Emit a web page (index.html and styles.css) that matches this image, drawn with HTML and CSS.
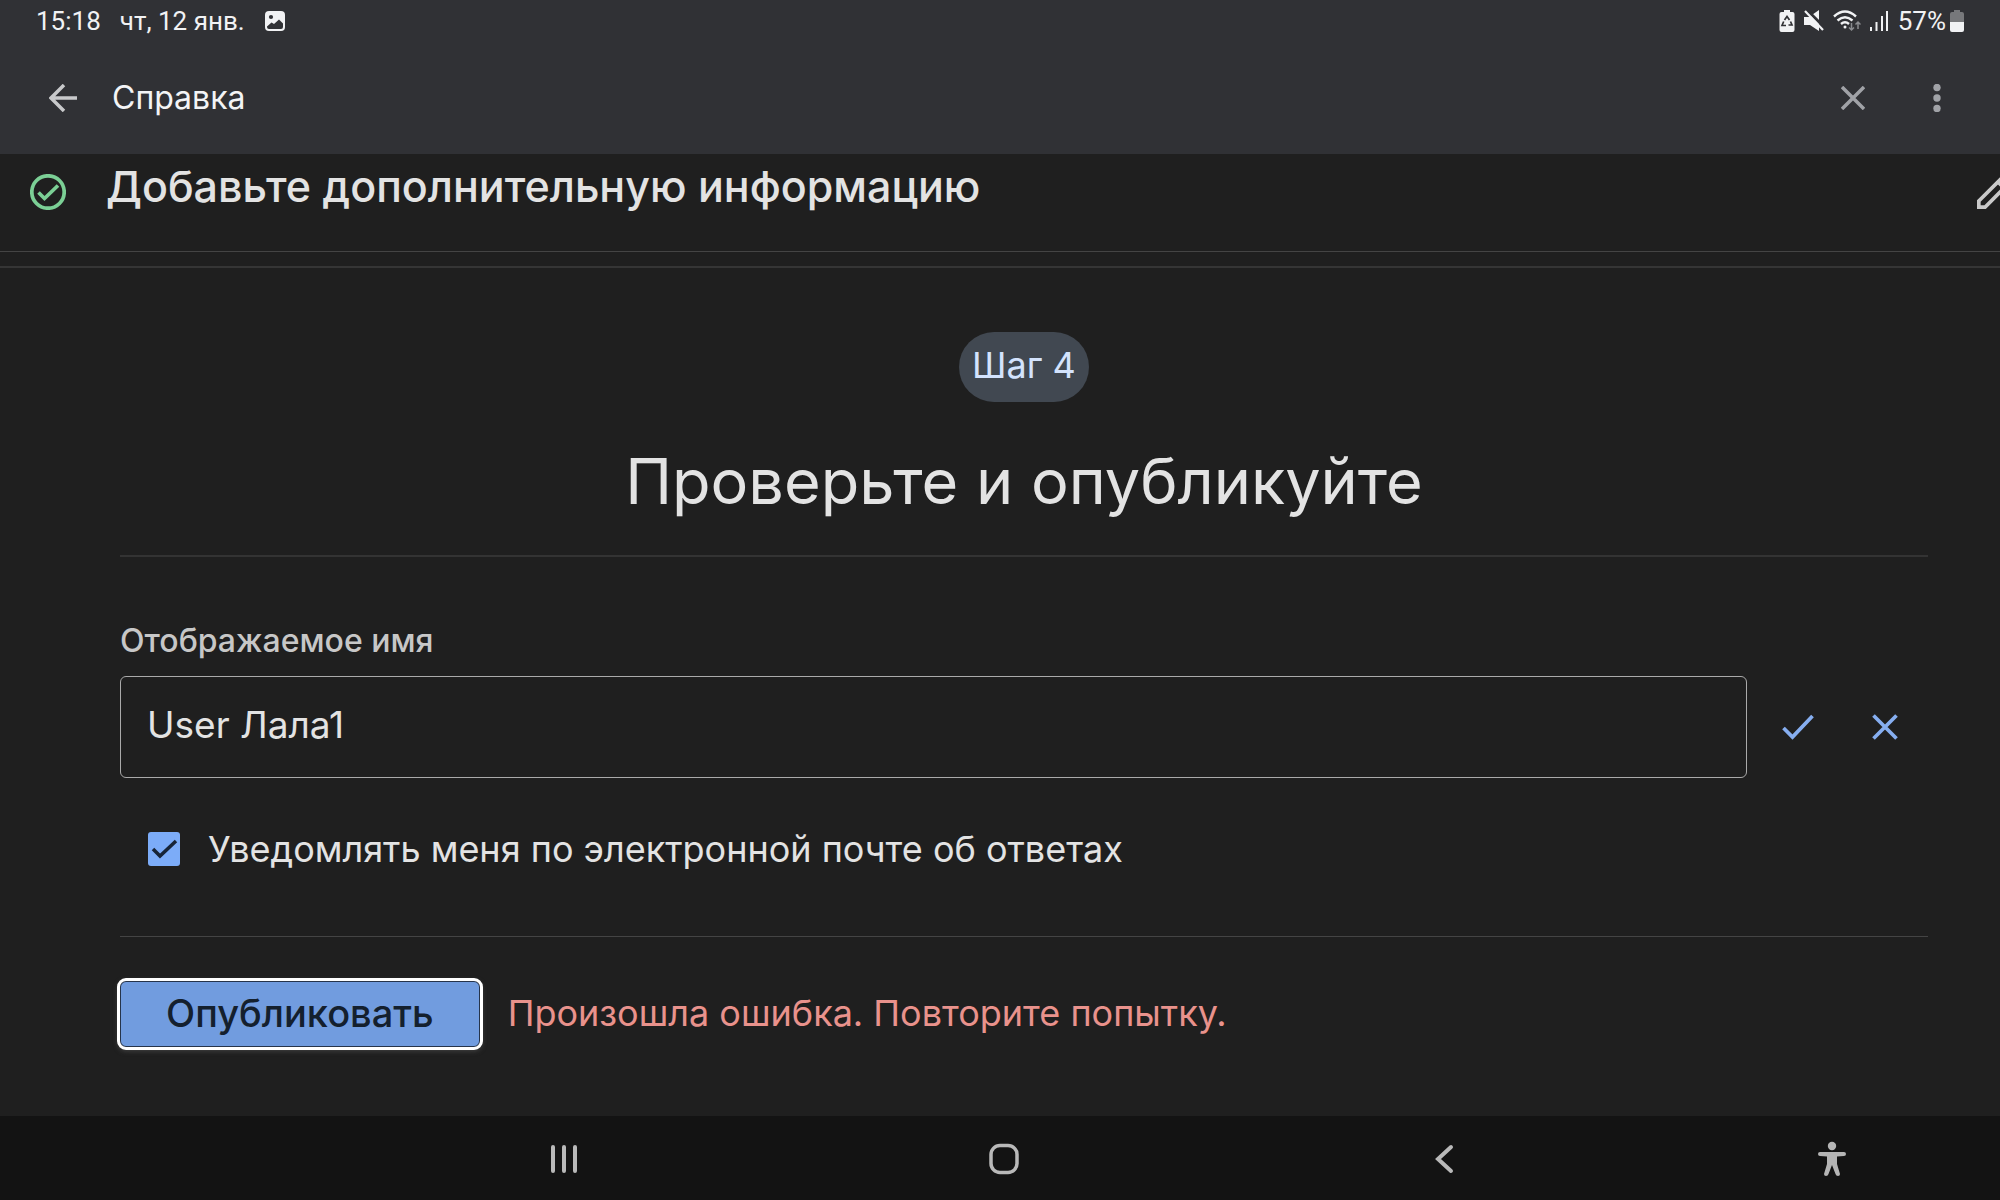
FILE: index.html
```html
<!DOCTYPE html>
<html lang="ru">
<head>
<meta charset="utf-8">
<meta name="viewport" content="width=device-width, initial-scale=1">
<title>Справка</title>
<link rel="stylesheet" href="styles.css">
</head>
<body>
<header class="top">
  <div class="status">
    <time class="clock">15:18</time>
    <span class="date">чт, 12 янв.</span>
    <svg class="status-picture" viewBox="0 0 20 20" aria-hidden="true"><rect width="20" height="20" rx="4" fill="#f1f2f4"/><circle cx="6" cy="6" r="2.1" fill="#303135"/><path d="M2 15.500L6.500 11.500L9 13L14 8.500L18 12.500V16Q18 18 16 18H4Q2 18 2 16Z" fill="#303135"/></svg>
    <div class="indicators">
      <svg width="16" height="22" viewBox="0 0 16 22" aria-hidden="true"><path d="M5 0h6v2h2.500Q15.500 2 15.500 4v16q0 2-2 2h-11q-2 0-2-2V4q0-2 2-2H5z" fill="#f1f2f4"/><path d="M5.500 10L8 6.500l2.500 3.500M11.500 11.500L13 15H9.500M7 15.500H3l1.700-4" fill="none" stroke="#303135" stroke-width="1.700"/></svg>
      <svg width="20" height="22" viewBox="0 0 20 22" aria-hidden="true"><path d="M0 7h5l10-7v21l-9-6H0z" fill="#f1f2f4"/><path d="M2 -1L21 18" stroke="#303135" stroke-width="3"/><path d="M1 1L19 20" stroke="#f1f2f4" stroke-width="2.200"/></svg>
      <svg width="28" height="22" viewBox="0 0 28 22" fill="none" stroke="#f1f2f4" stroke-width="2.400" aria-hidden="true"><path d="M1 6.500Q12 -3.500 23 6.500M4.500 10.500Q12 4 19.500 10.500M8 14Q12 10.500 16 14"/><circle cx="12" cy="17" r="1.500" fill="#f1f2f4" stroke="none"/><path d="M18.500 13v7m-2.500-2.500l2.500 2.500l2.500-2.500M25 19v-7m-2.500 2.500l2.500-2.500l2.500 2.500" stroke="#898b8f" stroke-width="1.500"/></svg>
      <svg width="18" height="22" viewBox="0 0 18 22" fill="none" stroke="#f1f2f4" stroke-width="2" aria-hidden="true"><path d="M1 17v4M6.500 12v9M12 6v15M17 1v20"/></svg>
      <span class="percent">57%</span>
      <svg width="14" height="22" viewBox="0 0 14 22" aria-hidden="true"><path d="M4 0h6v2h2q2 0 2 2v9H0V4q0-2 2-2h2z" fill="#77787b"/><path d="M0 12h14v8q0 2-2 2H2q-2 0-2-2z" fill="#f1f2f4"/></svg>
    </div>
  </div>
  <div class="appbar">
    <button class="icon-button" aria-label="Назад"><svg width="28" height="28" viewBox="0 0 28 28" fill="none" stroke="#c8c9cb" stroke-width="3.500"><path d="M28 14H2M15 1L2 14l13 13"/></svg></button>
    <h1 class="app-title">Справка</h1>
    <button class="icon-button close" aria-label="Закрыть"><svg width="24" height="24" viewBox="0 0 24 24" fill="none" stroke="#a0a2a7" stroke-width="3.500"><path d="M1 1l22 22M23 1L1 23"/></svg></button>
    <button class="icon-button" aria-label="Ещё"><svg width="8" height="28" viewBox="0 0 8 28" fill="#a0a2a7"><circle cx="4" cy="3.500" r="3.700"/><circle cx="4" cy="14" r="3.700"/><circle cx="4" cy="24.500" r="3.700"/></svg></button>
  </div>
</header>
<main class="content">
  <section class="done-step">
    <svg class="done-icon" width="36" height="36" viewBox="0 0 36 36" fill="none" stroke="#7bcf95" stroke-width="3.700" aria-hidden="true"><circle cx="18" cy="18" r="16.200"/><path d="M8.500 18.500l6 6L28 11.500"/></svg>
    <h2 class="done-title">Добавьте дополнительную информацию</h2>
    <button class="edit" aria-label="Изменить"><svg width="34" height="34" viewBox="0 0 34 34" fill="none" stroke="#c9c9c9" stroke-width="3.700"><path d="M1.800 26L26 2l6 6L8 32.200H1.800zM21 7l6 6"/></svg></button>
  </section>
  <section class="step">
    <span class="chip">Шаг 4</span>
    <h2 class="step-title">Проверьте и опубликуйте</h2>
    <form class="form">
      <label class="label" for="name">Отображаемое имя</label>
      <div class="name-row">
        <input class="name" id="name" type="text" value="User Лала1">
        <button class="icon-button" type="button" aria-label="Сохранить"><svg width="32" height="26" viewBox="0 0 32 26" fill="none" stroke="#86aef0" stroke-width="3.700"><path d="M1.500 14l9 9L30.500 2"/></svg></button>
        <button class="icon-button" type="button" aria-label="Отменить"><svg width="26" height="26" viewBox="0 0 26 26" fill="none" stroke="#86aef0" stroke-width="3.700"><path d="M1.500 1.500l23 23M24.500 1.500l-23 23"/></svg></button>
      </div>
      <label class="notify"><input class="tick" type="checkbox" checked>Уведомлять меня по электронной почте об ответах</label>
      <div class="actions">
        <button class="publish" type="button">Опубликовать</button>
        <p class="error" role="alert">Произошла ошибка. Повторите попытку.</p>
      </div>
    </form>
  </section>
</main>
<nav class="navbar">
  <span></span>
  <button class="nav-button" aria-label="Недавние"><svg width="32" height="36" viewBox="0 0 32 36" fill="none" stroke="#b9b9b9" stroke-width="4" stroke-linecap="round"><path d="M5 6v24M16 6v24M27 6v24"/></svg></button>
  <button class="nav-button" aria-label="Главный экран"><svg width="32" height="36" viewBox="0 0 32 36" fill="none" stroke="#b9b9b9" stroke-width="3.500"><rect x="3" y="4.500" width="26" height="27" rx="9"/></svg></button>
  <button class="nav-button" aria-label="Назад"><svg width="32" height="36" viewBox="0 0 32 36" fill="none" stroke="#b9b9b9" stroke-width="4" stroke-linecap="round"><path d="M23 6L10 18l13 12"/></svg></button>
  <button class="nav-button" aria-label="Специальные возможности"><svg width="32" height="36" viewBox="0 0 32 36" fill="#b5b5b5"><circle cx="16" cy="5" r="4.200"/><path d="M4 11h24q2 0 2 2t-2 2l-7 .5V23l3 10q0 2-2 2t-2.500-2L16 24l-3.500 9q-.5 2-2.500 2t-2-2l3-10v-7.500L4 15q-2 0-2-2t2-2z"/></svg></button>
</nav>
</body>
</html>
```
FILE: styles.css
```css
* { box-sizing: border-box; }

body {
  display: flex;
  flex-direction: column;
  min-height: 100vh;
  margin: 0;
  overflow-x: hidden;
  background: #1f1f1f;
  color: #e3e3e3;
  font-family: Inter, "Noto Sans", sans-serif;
}

h1, h2, p { margin: 0; font-weight: 400; }

button {
  padding: 0;
  border: 0;
  background: none;
  font: inherit;
}

svg { display: block; }

.top { background: #303135; }

.status {
  display: flex;
  align-items: center;
  height: 42px;
  padding: 0 36px;
  color: #f1f2f4;
  font: 26px/30px Roboto, sans-serif;
}

.date { margin: 0 20px 0 19px; }
.status-picture { width: 20px; height: 20px; }

.indicators {
  display: flex;
  align-items: center;
  gap: 9px;
  margin-left: auto;
}

.percent { margin: 0 -5px 0 1px; }

.appbar {
  display: flex;
  align-items: center;
  height: 112px;
  padding: 0 34px;
}

.icon-button {
  display: flex;
  flex: none;
  align-items: center;
  justify-content: center;
  width: 58px;
  height: 58px;
}

.app-title {
  margin-left: 20px;
  color: #f3f4f6;
  font-size: 32px;
  line-height: 40px;
}

.close { margin: 0 26px 0 auto; }

.content { flex: 1; }

.done-step {
  display: flex;
  align-items: flex-start;
  height: 98px;
  padding: 8px 0 0 30px;
  overflow: hidden;
  border-bottom: 1px solid #444;
}

.done-icon { flex: none; margin: 12px 40px 0 0; }

.done-title {
  font-size: 43px;
  font-weight: 500;
  line-height: 48px;
}

.edit { flex: none; margin: 13px -11px 0 auto; }

.step {
  display: flex;
  flex-direction: column;
  align-items: center;
  margin-top: 14px;
  padding: 64px 72px 64px 120px;
  border-top: 2px solid #353535;
}

.chip {
  padding: 0 13px 3px;
  border-radius: 35px;
  background: #414851;
  color: #d3e3fd;
  font-size: 36px;
  line-height: 67px;
}

.step-title {
  margin-top: 34px;
  font-size: 63px;
  line-height: 90px;
}

.form {
  align-self: stretch;
  margin-top: 29px;
  border-top: 2px solid #333;
}

.label {
  display: block;
  margin: 64px 0 15px;
  color: #c7c7c7;
  font-size: 32px;
  font-weight: 500;
  line-height: 40px;
}

.name-row {
  display: flex;
  align-items: center;
  gap: 29px;
  padding-right: 14px;
}

.name-row .icon-button:first-of-type { margin-left: -7px; }

.name {
  flex: 1;
  min-width: 0;
  height: 102px;
  padding: 0 26px 5px;
  border: 1px solid #aaa;
  border-radius: 6px;
  outline: 0;
  background: none;
  color: #e3e3e3;
  font: 37px/48px Inter, "Noto Sans", sans-serif;
}

.notify {
  display: flex;
  align-items: center;
  gap: 28px;
  margin: 45px 0 61px 28px;
  font-size: 36px;
  line-height: 52px;
}

.tick {
  flex: none;
  width: 32px;
  height: 34px;
  margin: 0;
  border-radius: 3px;
  appearance: none;
  background: #7cacf8 url("data:image/svg+xml,%3Csvg xmlns='http://www.w3.org/2000/svg' viewBox='0 0 32 34'%3E%3Cpath d='M5 17l7 7L28 9' fill='none' stroke='%23172437' stroke-width='3.500'/%3E%3C/svg%3E");
}

.actions {
  display: flex;
  align-items: center;
  gap: 28px;
  padding-top: 44px;
  border-top: 1px solid #444;
}

.publish {
  padding: 0 45px 2px;
  border: 1px solid #26344b;
  border-radius: 6px;
  outline: 3px solid #fff;
  background: #719cdf;
  box-shadow: 0 2px 5px 2px #444;
  color: #14202e;
  font-size: 38px;
  font-weight: 500;
  line-height: 62px;
}

.error {
  padding-bottom: 3px;
  color: #e9928c;
  font-size: 36px;
  line-height: 52px;
}

.navbar {
  display: grid;
  grid-template-columns: 344fr 440fr 440fr 440fr 336fr;
  align-items: center;
  height: 84px;
  padding-top: 2px;
  background: #131313;
}

.nav-button {
  display: flex;
  justify-content: center;
}
```
